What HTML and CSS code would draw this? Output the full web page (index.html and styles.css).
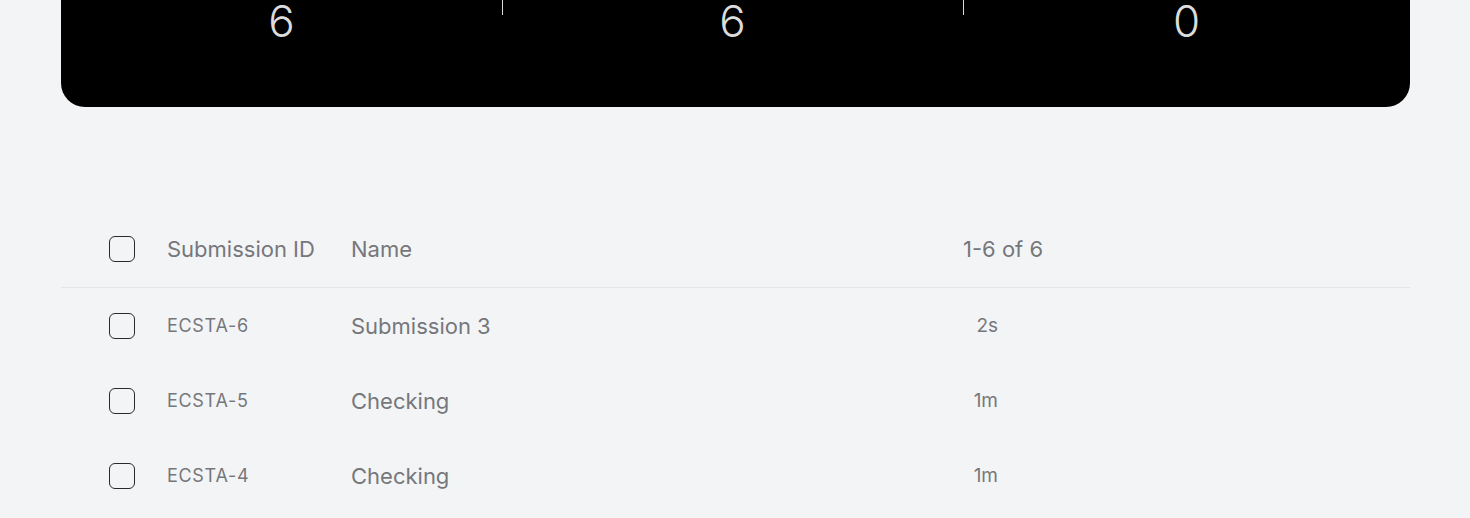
FILE: index.html
```html
<!DOCTYPE html>
<html lang="en">
<head>
<meta charset="utf-8">
<title>Submissions</title>
<link rel="stylesheet" href="styles.css">
</head>
<body>
<main class="page">
  <section class="stats-card">
    <div class="stat"><span class="stat-value">6</span></div>
    <div class="stat stat-divided"><span class="stat-value">6</span></div>
    <div class="stat stat-divided"><span class="stat-value">0</span></div>
  </section>

  <section class="table">
    <div class="row head">
      <div class="cell cell-check"><span class="checkbox"></span></div>
      <div class="cell cell-id">Submission ID</div>
      <div class="cell cell-name">Name</div>
      <div class="cell cell-time head-count">1-6 of 6</div>
    </div>
    <div class="row">
      <div class="cell cell-check"><span class="checkbox"></span></div>
      <div class="cell cell-id id">ECSTA-6</div>
      <div class="cell cell-name">Submission 3</div>
      <div class="cell cell-time"><span class="time">2s</span></div>
    </div>
    <div class="row">
      <div class="cell cell-check"><span class="checkbox"></span></div>
      <div class="cell cell-id id">ECSTA-5</div>
      <div class="cell cell-name">Checking</div>
      <div class="cell cell-time"><span class="time">1m</span></div>
    </div>
    <div class="row">
      <div class="cell cell-check"><span class="checkbox"></span></div>
      <div class="cell cell-id id">ECSTA-4</div>
      <div class="cell cell-name">Checking</div>
      <div class="cell cell-time"><span class="time">1m</span></div>
    </div>
  </section>
</main>
</body>
</html>
```

FILE: styles.css
```css
* { box-sizing: border-box; }

html, body {
  margin: 0;
  padding: 0;
  background: #f3f4f6;
  overflow: hidden;
}

body {
  font-family: Inter, "Noto Sans", "Liberation Sans", sans-serif;
  color: #76777b;
}

.page {
  padding: 0 60px 0 61px;
}

.stats-card {
  margin-top: -60px;
  height: 167px;
  background: #000;
  border-radius: 24px;
  display: grid;
  grid-template-columns: 441px 461px 1fr;
  align-items: start;
  padding-top: 65px;
}

.stat {
  position: relative;
  display: flex;
  justify-content: center;
}

.stat-divided::before {
  content: "";
  position: absolute;
  left: 0;
  top: -46px;
  width: 1px;
  height: 56px;
  background: #d9d9d9;
}

.stat-value {
  font-size: 44px;
  line-height: 32px;
  font-weight: 300;
  color: #dcdcdc;
}

.table {
  margin-top: 105px;
}

.row {
  display: flex;
  align-items: center;
  height: 75px;
}

.row.head {
  border-bottom: 1px solid #e3e4e7;
  height: 76px;
  padding-bottom: 1px;
}

.cell-check {
  width: 106px;
  padding-left: 48px;
  display: flex;
  align-items: center;
}

.checkbox {
  display: block;
  width: 26px;
  height: 26px;
  border: 1px solid #2a2a2a;
  border-radius: 6px;
  background: transparent;
}

.cell-id {
  width: 184px;
  font-size: 22px;
}

.cell-id.id {
  font-size: 18px;
  letter-spacing: 0.7px;
}

.cell-name {
  width: 612px;
  font-size: 22px;
}

.cell-time {
  font-size: 22px;
}

.time {
  display: block;
  width: 35px;
  text-align: right;
  font-size: 19px;
}
```
